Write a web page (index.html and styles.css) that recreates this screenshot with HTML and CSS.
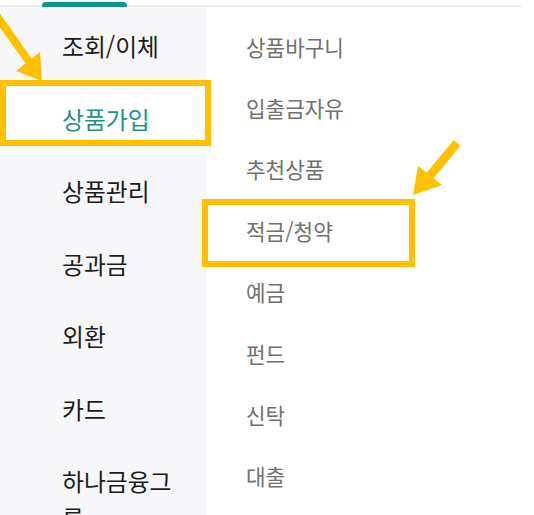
FILE: index.html
```html
<!DOCTYPE html>
<html lang="ko">
<head>
    <meta charset="UTF-8">
    <meta name="viewport" content="width=device-width, initial-scale=1.0">
    <title>전체메뉴</title>
    <link rel="stylesheet" href="styles.css">
</head>
<body>
    <div class="tabbar">
        <span class="tab-indicator"></span>
    </div>
    <div class="menu">
        <ul class="side">
            <li>조회/이체</li>
            <li class="active">상품가입</li>
            <li>상품관리</li>
            <li>공과금</li>
            <li>외환</li>
            <li>카드</li>
            <li>하나금융그룹</li>
        </ul>
        <ul class="sub">
            <li>상품바구니</li>
            <li>입출금자유</li>
            <li>추천상품</li>
            <li>적금/청약</li>
            <li>예금</li>
            <li>펀드</li>
            <li>신탁</li>
            <li>대출</li>
        </ul>
    </div>

    <!-- annotation marks -->
    <div class="mark mark-side"></div>
    <div class="mark mark-sub"></div>
    <svg class="arrows" width="534" height="515" viewBox="0 0 534 515">
        <line x1="-4" y1="15" x2="30" y2="63" stroke="#ffc000" stroke-width="8"/>
        <polygon points="42,81 16,71 40,52" fill="#ffc000"/>
        <line x1="457" y1="143" x2="428" y2="178" stroke="#ffc000" stroke-width="9"/>
        <polygon points="413,195 418,166 442,185" fill="#ffc000"/>
    </svg>
</body>
</html>
```

FILE: styles.css
```css
body {
    margin: 0;
    width: 534px;
    height: 515px;
    overflow: hidden;
    position: relative;
    background-color: #fff;
    font-family: "Noto Sans CJK KR", "Noto Sans", sans-serif;
}
ul {
    list-style: none;
    margin: 0;
    padding: 0;
}
.tabbar {
    width: 521px;
    height: 7px;
    border-bottom: 2px solid #ececec;
    box-sizing: border-box;
    padding: 2px 0 0 42px;
}
.tab-indicator {
    display: block;
    width: 85px;
    height: 5px;
    border-radius: 4px 4px 0 0;
    background-color: #0f958a;
}
.menu {
    display: flex;
    height: 508px;
}
.side {
    width: 207px;
    flex: none;
    background-color: #f7f7f9;
    padding-top: 3px;
}
.side li {
    padding: 18px 20px 18px 62px;
    font-size: 23.8px;
    line-height: 36.5px;
    color: #1c1c1c;
}
.side li.active {
    background-color: #fff;
    color: #23908a;
}
.sub {
    flex: 1;
    padding: 9px 0 0 39px;
}
.sub li {
    padding: 15.7px 0;
    font-size: 21.3px;
    line-height: 30px;
    color: #707070;
}
.mark {
    position: absolute;
    border: 6px solid #ffc000;
    box-sizing: border-box;
}
.mark-side {
    left: 0;
    top: 80px;
    width: 211px;
    height: 66px;
}
.mark-sub {
    left: 202px;
    top: 199px;
    width: 213px;
    height: 68px;
}
.arrows {
    position: absolute;
    left: 0;
    top: 0;
}
```
